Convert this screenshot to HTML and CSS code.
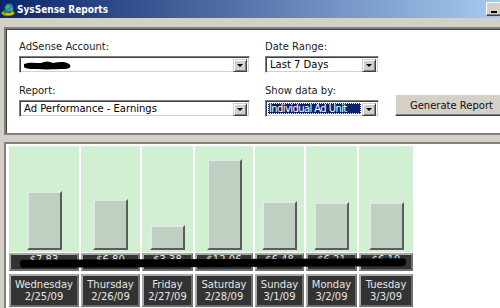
FILE: index.html
```html
<!DOCTYPE html>
<html lang="en">
<head>
	<meta charset="UTF-8">
	<title>SysSense Reports</title>
	<link rel="stylesheet" href="styles.css">
</head>
<body>
	<div class="window">
		<div class="titlebar">
			<svg class="app-icon" width="15" height="15" viewBox="0 0 15 15">
				<ellipse cx="7" cy="11" rx="6.5" ry="3" fill="#c8c800" stroke="#5a5a00" stroke-width="0.8"/>
				<circle cx="8" cy="6" r="4.6" fill="#2f7fd0" stroke="#0d3a7a" stroke-width="0.8"/>
				<path d="M5 4 L8 3 L9 5 L7 7 L5 6 Z" fill="#3cbf3c"/>
				<path d="M9 7 L11 6 L12 8 L10 10 Z" fill="#3cbf3c"/>
				<path d="M2 9 L5 8 L6 11 L3 12 Z" fill="#1e8e1e"/>
			</svg>
			<span class="title">SysSense Reports</span>
			<span class="btn-min"></span>
		</div>

		<div class="form-panel">
			<div class="field">
				<label class="label">AdSense Account:</label>
				<div class="select select-wide">
					<span class="select-text">
						<svg class="redact" width="50" height="12" viewBox="0 0 50 12">
							<path d="M1 5 C6 3 12 4 18 4 C22 2 26 2 30 4 C36 3 42 2 46 5 C49 7 47 10 42 10 C34 10 24 11 14 10 C8 10 3 10 1 8 Z" fill="#000"/>
						</svg>
					</span>
					<span class="arrow"></span>
				</div>
			</div>
			<div class="field">
				<label class="label">Date Range:</label>
				<div class="select select-narrow">
					<span class="select-text">Last 7 Days</span>
					<span class="arrow"></span>
				</div>
			</div>
			<div></div>
			<div class="field">
				<label class="label">Report:</label>
				<div class="select select-wide">
					<span class="select-text">Ad Performance - Earnings</span>
					<span class="arrow"></span>
				</div>
			</div>
			<div class="field">
				<label class="label">Show data by:</label>
				<div class="select select-narrow">
					<span class="select-text focused">Individual Ad Unit</span>
					<span class="arrow"></span>
				</div>
			</div>
			<button class="generate">Generate Report</button>
		</div>

		<div class="chart-panel">
			<div class="days">
				<div class="day" style="width:70px">
					<div class="plot"><div class="bar" style="height:59px"></div></div>
					<div class="value">$7.83</div>
					<div class="date">Wednesday<br>2/25/09</div>
				</div>
				<div class="day" style="width:59px">
					<div class="plot"><div class="bar" style="height:51px"></div></div>
					<div class="value">$6.80</div>
					<div class="date">Thursday<br>2/26/09</div>
				</div>
				<div class="day" style="width:51px">
					<div class="plot"><div class="bar" style="height:25px"></div></div>
					<div class="value">$3.38</div>
					<div class="date">Friday<br>2/27/09</div>
				</div>
				<div class="day" style="width:58px">
					<div class="plot"><div class="bar" style="height:91px"></div></div>
					<div class="value">$12.06</div>
					<div class="date">Saturday<br>2/28/09</div>
				</div>
				<div class="day" style="width:49px">
					<div class="plot"><div class="bar" style="height:49px"></div></div>
					<div class="value">$6.48</div>
					<div class="date">Sunday<br>3/1/09</div>
				</div>
				<div class="day" style="width:51px">
					<div class="plot"><div class="bar" style="height:48px"></div></div>
					<div class="value">$6.21</div>
					<div class="date">Monday<br>3/2/09</div>
				</div>
				<div class="day" style="width:54px">
					<div class="plot"><div class="bar" style="height:48px"></div></div>
					<div class="value">$6.19</div>
					<div class="date">Tuesday<br>3/3/09</div>
				</div>
			</div>
			<!-- redaction mark over the values row -->
			<div class="scribble"></div>
		</div>
	</div>
</body>
</html>
```

FILE: styles.css
```css
*{
	margin: 0;
	padding: 0;
	box-sizing: border-box;
}
body{
	width: 500px;
	height: 308px;
	overflow: hidden;
	background-color: #d4d0c8;
	font-family: "DejaVu Sans", Tahoma, sans-serif;
	font-size: 10px;
	color: #000;
}
.window{
	width: 500px;
	height: 308px;
	overflow: hidden;
}

/* title bar */
.titlebar{
	display: flex;
	align-items: center;
	height: 18px;
	padding-left: 1px;
	background: linear-gradient(to right, #0a246a, #a6caf0);
}
.app-icon{
	flex: none;
	margin-top: 1px;
}
.title{
	margin-left: 1px;
	font-family: "DejaVu Sans Condensed", "DejaVu Sans", sans-serif;
	font-weight: bold;
	font-size: 10px;
	color: #fff;
}
.btn-min{
	position: relative;
	width: 16px;
	height: 14px;
	margin-left: auto;
	margin-right: -2px;
	background-color: #d4d0c8;
	border: 1px solid;
	border-color: #fff #404040 #404040 #fff;
	box-shadow: inset -1px -1px #808080;
}
.btn-min::after{
	content: "";
	position: absolute;
	left: 4px;
	bottom: 2px;
	width: 6px;
	height: 2px;
	background-color: #000;
}

/* top form */
.form-panel{
	display: grid;
	grid-template-columns: 231px 114px auto;
	column-gap: 15px;
	row-gap: 12px;
	width: 530px;
	margin: 9px 0 0 4px;
	padding: 12px 0 16px 13px;
	background-color: #fff;
	border: 2px solid #808080;
	box-shadow: inset 1px 1px #404040;
}
.label{
	display: block;
	height: 12px;
	line-height: 12px;
	margin-bottom: 3px;
	color: #222;
}
.select{
	display: flex;
	height: 17px;
	background-color: #fff;
	border: 1px solid;
	border-color: #808080 #fff #fff #808080;
	box-shadow: inset 1px 1px #404040, inset -1px -1px #d4d0c8;
	padding: 2px;
}
.select-wide{
	width: 231px;
}
.select-narrow{
	width: 114px;
}
.select-text{
	flex: 1;
	display: flex;
	align-items: center;
	padding-left: 2px;
	line-height: 13px;
	white-space: nowrap;
	overflow: hidden;
}
.select-text.focused{
	margin-right: 1px;
	padding-left: 1px;
	background-color: #0a246a;
	color: #fff;
	letter-spacing: -0.6px;
	outline: 1px dotted #fff;
	outline-offset: -1px;
}
.redact{
	margin-left: -1px;
}
.arrow{
	position: relative;
	flex: none;
	width: 14px;
	height: 13px;
	background-color: #d4d0c8;
	border: 1px solid;
	border-color: #d4d0c8 #404040 #404040 #d4d0c8;
	box-shadow: inset 1px 1px #fff, inset -1px -1px #808080;
}
.arrow::after{
	content: "";
	position: absolute;
	left: 3px;
	top: 4px;
	border-left: 3px solid transparent;
	border-right: 3px solid transparent;
	border-top: 3px solid #000;
}
.generate{
	align-self: end;
	justify-self: start;
	width: 115px;
	height: 22px;
	margin-left: 1px;
	margin-bottom: 1px;
	padding-right: 2px;
	background-color: #d4d0c8;
	border: 1px solid;
	border-color: #fff #404040 #404040 #fff;
	box-shadow: inset -1px -1px #808080;
	font-family: "DejaVu Sans", Tahoma, sans-serif;
	font-size: 10px;
	color: #111;
}

/* chart */
.chart-panel{
	position: relative;
	width: 530px;
	height: 200px;
	margin: 7px 0 0 4px;
	padding: 2px 0 0 3px;
	background-color: #fff;
	border-top: 2px solid #808080;
	border-left: 2px solid #808080;
}
.days{
	display: flex;
	gap: 2px;
}
.day{
	display: flex;
	flex-direction: column;
}
.plot{
	display: flex;
	justify-content: center;
	align-items: flex-end;
	height: 106px;
	padding-bottom: 2px;
	background-color: #d1efd1;
}
.bar{
	width: 35px;
	background-color: #bfd0c2;
	border: 2px solid;
	border-color: #e4e8e4 #5c5c5c #5c5c5c #e4e8e4;
}
.value,
.date{
	background-color: #333;
	border: 2px solid;
	border-color: #a8a8a8 #707070 #707070 #a8a8a8;
	color: #e6e6e6;
	text-align: center;
	white-space: nowrap;
}
.value{
	height: 18px;
	margin-top: 1px;
	line-height: 10px;
	overflow: hidden;
}
.date{
	height: 33px;
	margin-top: 3px;
	padding-top: 3px;
	line-height: 12px;
}
.scribble{
	position: absolute;
	left: 14px;
	top: 115px;
	width: 386px;
	height: 8px;
	background-color: #000;
	border-radius: 3px 4px 4px 3px;
	transform: rotate(-0.25deg);
}
```
